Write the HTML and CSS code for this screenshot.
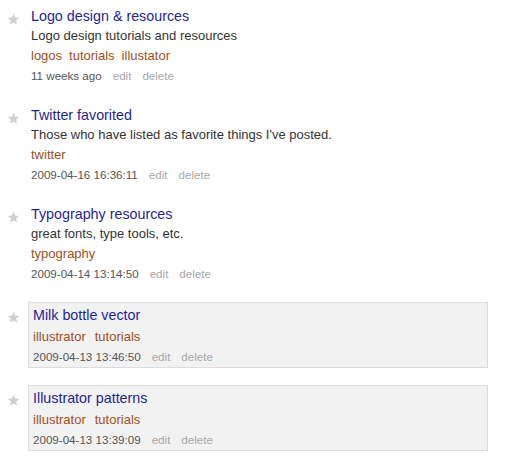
FILE: index.html
```html
<!DOCTYPE html>
<html>
<head>
<meta charset="utf-8">
<link rel="stylesheet" href="styles.css">
</head>
<body>
<ul class="list">
  <li class="item">
    <span class="star"><svg viewBox="0 0 24 24" width="13" height="13"><path d="M12 1.5l3.1 7 7.4.6-5.6 4.9 1.7 7.3L12 17.4l-6.6 3.9 1.7-7.3L1.5 9.1l7.4-.6z"/></svg></span>
    <div class="body">
      <a class="title" href="#">Logo design &amp; resources</a>
      <div class="desc">Logo design tutorials and resources</div>
      <div class="tags"><a href="#">logos</a><a href="#">tutorials</a><a href="#">illustator</a></div>
      <div class="meta"><span class="date">11 weeks ago</span><a href="#">edit</a><a href="#">delete</a></div>
    </div>
  </li>
  <li class="item">
    <span class="star"><svg viewBox="0 0 24 24" width="13" height="13"><path d="M12 1.5l3.1 7 7.4.6-5.6 4.9 1.7 7.3L12 17.4l-6.6 3.9 1.7-7.3L1.5 9.1l7.4-.6z"/></svg></span>
    <div class="body">
      <a class="title" href="#">Twitter favorited</a>
      <div class="desc">Those who have listed as favorite things I've posted.</div>
      <div class="tags"><a href="#">twitter</a></div>
      <div class="meta"><span class="date">2009-04-16 16:36:11</span><a href="#">edit</a><a href="#">delete</a></div>
    </div>
  </li>
  <li class="item">
    <span class="star"><svg viewBox="0 0 24 24" width="13" height="13"><path d="M12 1.5l3.1 7 7.4.6-5.6 4.9 1.7 7.3L12 17.4l-6.6 3.9 1.7-7.3L1.5 9.1l7.4-.6z"/></svg></span>
    <div class="body">
      <a class="title" href="#">Typography resources</a>
      <div class="desc">great fonts, type tools, etc.</div>
      <div class="tags"><a href="#">typography</a></div>
      <div class="meta"><span class="date">2009-04-14 13:14:50</span><a href="#">edit</a><a href="#">delete</a></div>
    </div>
  </li>
  <li class="item item-boxed">
    <span class="star"><svg viewBox="0 0 24 24" width="13" height="13"><path d="M12 1.5l3.1 7 7.4.6-5.6 4.9 1.7 7.3L12 17.4l-6.6 3.9 1.7-7.3L1.5 9.1l7.4-.6z"/></svg></span>
    <div class="body">
      <a class="title" href="#">Milk bottle vector</a>
      <div class="tags"><a href="#">illustrator</a><a href="#">tutorials</a></div>
      <div class="meta"><span class="date">2009-04-13 13:46:50</span><a href="#">edit</a><a href="#">delete</a></div>
    </div>
  </li>
  <li class="item item-boxed">
    <span class="star"><svg viewBox="0 0 24 24" width="13" height="13"><path d="M12 1.5l3.1 7 7.4.6-5.6 4.9 1.7 7.3L12 17.4l-6.6 3.9 1.7-7.3L1.5 9.1l7.4-.6z"/></svg></span>
    <div class="body">
      <a class="title" href="#">Illustrator patterns</a>
      <div class="tags"><a href="#">illustrator</a><a href="#">tutorials</a></div>
      <div class="meta"><span class="date">2009-04-13 13:39:09</span><a href="#">edit</a><a href="#">delete</a></div>
    </div>
  </li>
</ul>
</body>
</html>
```

FILE: styles.css
```css
html, body {
  margin: 0;
  padding: 0;
  background: #fff;
}
body {
  font-family: "Liberation Sans", Arial, sans-serif;
  color: #333;
}
a {
  text-decoration: none;
}
.list {
  list-style: none;
  margin: 0;
  padding: 6px 0 0 0;
  width: 488px;
  display: flex;
  flex-direction: column;
  gap: 19px;
}
.item {
  display: flex;
  align-items: flex-start;
}
.star {
  flex: 0 0 28px;
  display: flex;
  padding: 7px 0 0 7px;
  box-sizing: border-box;
}
.star svg {
  fill: #d0d0d0;
}
.body {
  flex: 1;
  padding-left: 3px;
  display: flex;
  flex-direction: column;
}
.item-boxed {
  margin-top: -1px;
}
.item-boxed .star {
  padding-top: 9px;
}
.item-boxed .body {
  border: 1px solid #dcdcdc;
  background: #f2f2f2;
  padding: 2px 4px 0 4px;
}
.item-boxed .title {
  margin-bottom: 2px;
}
.item-boxed + .item-boxed {
  margin-top: -2px;
}
.title {
  font-size: 14.3px;
  line-height: 20px;
  color: #1f1f98;
}
.desc {
  font-size: 13px;
  line-height: 20px;
  color: #333;
}
.tags {
  font-size: 13px;
  line-height: 20px;
  display: flex;
  gap: 7px;
}
.item-boxed .tags {
  gap: 9px;
}
.tags a {
  color: #a0501c;
}
.meta {
  font-size: 11.6px;
  line-height: 20px;
  display: flex;
  gap: 11px;
}
.meta .date {
  color: #555;
}
.meta a {
  color: #a8a8a8;
}
```
